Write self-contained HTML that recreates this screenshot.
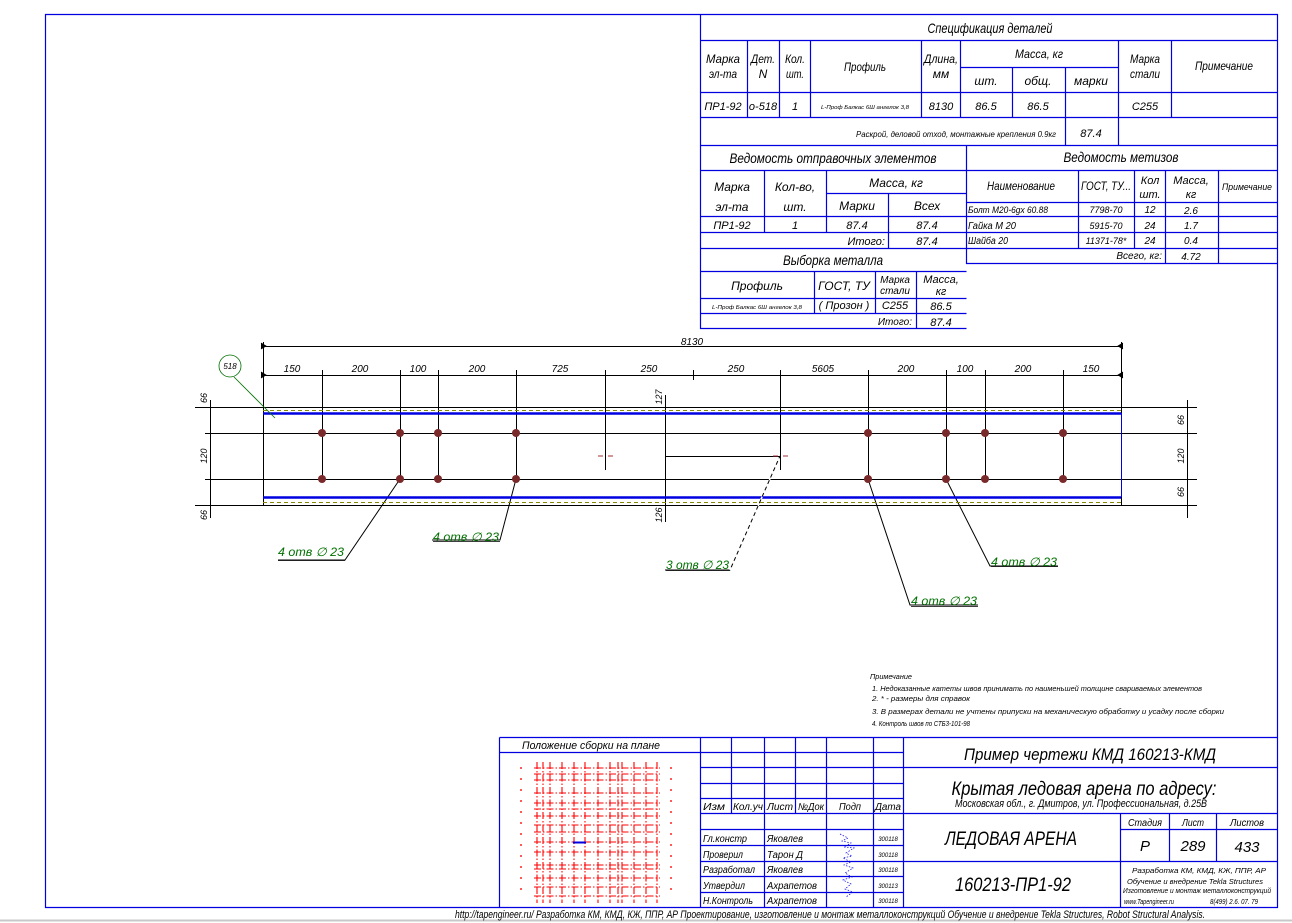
<!DOCTYPE html>
<html><head><meta charset="utf-8"><style>
html,body{margin:0;padding:0;background:#fff;}
svg{display:block}
text{font-family:"Liberation Sans",sans-serif;font-style:italic;fill:#000;}
.b{stroke:#0000e0;stroke-width:1.2;fill:none}
.k{stroke:#000;stroke-width:1;fill:none}
.g{fill:#007000}
</style></head><body>
<svg width="1292" height="923" viewBox="0 0 1292 923" xmlns="http://www.w3.org/2000/svg">
<rect x="0" y="0" width="1292" height="923" fill="#fff"/>
<path class="b" d="M45.5 14.5H1277.5V907.5H45.5Z"/>
<line x1="0" y1="920.5" x2="1292" y2="920.5" stroke="#c8c8c8" stroke-width="2"/>

<g class="b">
<path d="M700.5 14.5V328.5H966.5"/>
<path d="M700.5 40.5H1277.5M700.5 92.5H1277.5M700.5 117.5H1277.5M700.5 145.5H1277.5M960.5 67.5H1118.5"/>
<path d="M747.5 40.5V117.5M779.5 40.5V117.5M810.5 40.5V117.5M921.5 40.5V117.5M960.5 40.5V117.5M1012.5 67.5V117.5M1065.5 67.5V145.5M1118.5 40.5V145.5M1171.5 40.5V117.5"/>
<path d="M966.5 145.5V263.5H1277.5M700.5 170.5H1277.5M826.5 193.5H966.5M700.5 216.5H966.5M700.5 232.5H1277.5M700.5 248.5H1277.5M966.5 202.5H1277.5M966.5 216.5H1277.5"/>
<path d="M764.5 170.5V232.5M826.5 170.5V232.5M888.5 193.5V248.5"/>
<path d="M1078.5 170.5V248.5M1134.5 170.5V248.5M1165.5 170.5V263.5M1218.5 170.5V263.5"/>
<path d="M700.5 271.5H966.5M700.5 298.5H966.5M700.5 313.5H966.5M814.5 271.5V313.5M875.5 271.5V313.5M916.5 271.5V328.5"/>
</g>
<g font-size="12">
<text x="990" y="33" text-anchor="middle" font-size="14" textLength="125" lengthAdjust="spacingAndGlyphs">Спецификация деталей</text>
<text x="723" y="63" text-anchor="middle" textLength="34" lengthAdjust="spacingAndGlyphs">Марка</text>
<text x="723" y="78" text-anchor="middle" textLength="28" lengthAdjust="spacingAndGlyphs">эл-та</text>
<text x="763" y="63" text-anchor="middle" textLength="24" lengthAdjust="spacingAndGlyphs">Дет.</text>
<text x="763" y="78" text-anchor="middle">N</text>
<text x="795" y="63" text-anchor="middle" textLength="20" lengthAdjust="spacingAndGlyphs">Кол.</text>
<text x="795" y="78" text-anchor="middle" textLength="18" lengthAdjust="spacingAndGlyphs">шт.</text>
<text x="865" y="71" text-anchor="middle" textLength="42" lengthAdjust="spacingAndGlyphs">Профиль</text>
<text x="941" y="63" text-anchor="middle" textLength="34" lengthAdjust="spacingAndGlyphs">Длина,</text>
<text x="941" y="78" text-anchor="middle">мм</text>
<text x="1039" y="58" text-anchor="middle" textLength="48" lengthAdjust="spacingAndGlyphs">Масса, кг</text>
<text x="986" y="85" text-anchor="middle">шт.</text>
<text x="1038" y="85" text-anchor="middle">общ.</text>
<text x="1091" y="85" text-anchor="middle">марки</text>
<text x="1145" y="63" text-anchor="middle" textLength="30" lengthAdjust="spacingAndGlyphs">Марка</text>
<text x="1145" y="78" text-anchor="middle" textLength="30" lengthAdjust="spacingAndGlyphs">стали</text>
<text x="1224" y="70" text-anchor="middle" textLength="58" lengthAdjust="spacingAndGlyphs">Примечание</text>
<text x="723" y="110" text-anchor="middle" font-size="11">ПР1-92</text>
<text x="763" y="110" text-anchor="middle" font-size="11">о-518</text>
<text x="795" y="110" text-anchor="middle" font-size="11">1</text>
<text x="865" y="109" text-anchor="middle" font-size="5.5" textLength="88" lengthAdjust="spacingAndGlyphs">L-Проф Балкас 6Ш ангелок 3,8</text>
<text x="941" y="110" text-anchor="middle" font-size="11">8130</text>
<text x="986" y="110" text-anchor="middle" font-size="11">86.5</text>
<text x="1038" y="110" text-anchor="middle" font-size="11">86.5</text>
<text x="1145" y="110" text-anchor="middle" font-size="11">С255</text>
<text x="1056" y="137" text-anchor="end" font-size="8" textLength="200" lengthAdjust="spacingAndGlyphs">Раскрой, деловой отход, монтажные крепления 0.9кг</text>
<text x="1091" y="137" text-anchor="middle" font-size="11">87.4</text>
<text x="833" y="163" text-anchor="middle" font-size="14" textLength="207" lengthAdjust="spacingAndGlyphs">Ведомость отправочных элементов</text>
<text x="1121" y="162" text-anchor="middle" font-size="14" textLength="115" lengthAdjust="spacingAndGlyphs">Ведомость метизов</text>
<text x="732" y="191" text-anchor="middle">Марка</text>
<text x="732" y="211" text-anchor="middle">эл-та</text>
<text x="795" y="191" text-anchor="middle">Кол-во,</text>
<text x="795" y="211" text-anchor="middle">шт.</text>
<text x="896" y="187" text-anchor="middle">Масса, кг</text>
<text x="857" y="210" text-anchor="middle">Марки</text>
<text x="927" y="210" text-anchor="middle">Всех</text>
<text x="732" y="229" text-anchor="middle" font-size="11">ПР1-92</text>
<text x="795" y="229" text-anchor="middle" font-size="11">1</text>
<text x="857" y="229" text-anchor="middle" font-size="11">87.4</text>
<text x="927" y="229" text-anchor="middle" font-size="11">87.4</text>
<text x="885" y="245" text-anchor="end" font-size="11">Итого:</text>
<text x="927" y="245" text-anchor="middle" font-size="11">87.4</text>
<text x="1021" y="190" text-anchor="middle" textLength="68" lengthAdjust="spacingAndGlyphs">Наименование</text>
<text x="1106" y="190" text-anchor="middle" textLength="50" lengthAdjust="spacingAndGlyphs">ГОСТ, ТУ...</text>
<text x="1150" y="184" text-anchor="middle" font-size="11">Кол</text>
<text x="1150" y="198" text-anchor="middle" font-size="11">шт.</text>
<text x="1191" y="184" text-anchor="middle" font-size="11">Масса,</text>
<text x="1191" y="198" text-anchor="middle" font-size="11">кг</text>
<text x="1247" y="190" text-anchor="middle" font-size="9" textLength="50" lengthAdjust="spacingAndGlyphs">Примечание</text>
<text x="968" y="213" font-size="9" textLength="80" lengthAdjust="spacingAndGlyphs">Болт М20-6gх 60.88</text>
<text x="968" y="229" font-size="10" textLength="48" lengthAdjust="spacingAndGlyphs">Гайка М 20</text>
<text x="968" y="244" font-size="10" textLength="40" lengthAdjust="spacingAndGlyphs">Шайба 20</text>
<text x="1106" y="213" text-anchor="middle" font-size="9">7798-70</text>
<text x="1106" y="229" text-anchor="middle" font-size="9">5915-70</text>
<text x="1106" y="244" text-anchor="middle" font-size="9">11371-78*</text>
<text x="1150" y="213" text-anchor="middle" font-size="10">12</text>
<text x="1150" y="229" text-anchor="middle" font-size="10">24</text>
<text x="1150" y="244" text-anchor="middle" font-size="10">24</text>
<text x="1191" y="214" text-anchor="middle" font-size="10">2.6</text>
<text x="1191" y="229" text-anchor="middle" font-size="10">1.7</text>
<text x="1191" y="244" text-anchor="middle" font-size="10">0.4</text>
<text x="1162" y="259" text-anchor="end" font-size="10">Всего, кг:</text>
<text x="1191" y="260" text-anchor="middle" font-size="10">4.72</text>
<text x="833" y="265" text-anchor="middle" font-size="14" textLength="100" lengthAdjust="spacingAndGlyphs">Выборка металла</text>
<text x="757" y="290" text-anchor="middle">Профиль</text>
<text x="844" y="290" text-anchor="middle">ГОСТ, ТУ</text>
<text x="895" y="283" text-anchor="middle" font-size="10">Марка</text>
<text x="895" y="294" text-anchor="middle" font-size="10">стали</text>
<text x="941" y="283" text-anchor="middle" font-size="11">Масса,</text>
<text x="941" y="295" text-anchor="middle" font-size="11">кг</text>
<text x="757" y="309" text-anchor="middle" font-size="5.5" textLength="90" lengthAdjust="spacingAndGlyphs">L-Проф Балкас 6Ш ангелок 3,8</text>
<text x="844" y="309" text-anchor="middle" font-size="11">( Прозон )</text>
<text x="895" y="309" text-anchor="middle" font-size="11">С255</text>
<text x="941" y="310" text-anchor="middle" font-size="11">86.5</text>
<text x="912" y="325" text-anchor="end" font-size="10">Итого:</text>
<text x="941" y="326" text-anchor="middle" font-size="11">87.4</text>
</g>

<g class="k" stroke-width="0.8">
<path d="M263.5 342V505M1121.5 342V505"/>
<path d="M263 346.5H1121M263 375.5H1121"/>
<path d="M322.5 370V479M400.5 370V479M438.5 370V479M516.5 370V479M605.5 370V470M693.5 370V380M780.5 370V470M868.5 370V479M946.5 370V479M985.5 370V479M1063.5 370V479"/>
<path d="M195 407.5H1197M195 505.5H1197M205 433.5H1197M205 479.5H1197"/>
<path d="M210.5 400V518M1187.5 400V518"/>
<path d="M665.5 395V522M665 456.5H780"/>
<path d="M400 479L345 560H278M516 479L500 540H432M780 456L730 570H665M868 479L910 605H978M946 479L990 566H1058"/>
</g>
<g stroke="#000" stroke-width="0.8">
<path d="M261 343l5 3-5 3M1123 343l-5 3 5 3M261 372l5 3-5 3M1123 372l-5 3 5 3"/>
</g>
<path d="M263 410.5H1121M263 502.5H1121" stroke="#888800" stroke-width="1" stroke-dasharray="4 3"/>
<path d="M263 413.5H1121M263 497.5H1121" stroke="#0000e0" stroke-width="2.5"/>
<path d="M1121.5 413V497" stroke="#0000e0" stroke-width="1"/>
<path d="M730 570L780 456" stroke="#fff" stroke-width="1.5" stroke-dasharray="3 4"/>
<g fill="#7a2a2a">
<circle cx="322" cy="433" r="4"/><circle cx="400" cy="433" r="4"/><circle cx="438" cy="433" r="4"/><circle cx="516" cy="433" r="4"/>
<circle cx="868" cy="433" r="4"/><circle cx="946" cy="433" r="4"/><circle cx="985" cy="433" r="4"/><circle cx="1063" cy="433" r="4"/>
<circle cx="322" cy="479" r="4"/><circle cx="400" cy="479" r="4"/><circle cx="438" cy="479" r="4"/><circle cx="516" cy="479" r="4"/>
<circle cx="868" cy="479" r="4"/><circle cx="946" cy="479" r="4"/><circle cx="985" cy="479" r="4"/><circle cx="1063" cy="479" r="4"/>
</g>
<path d="M598 456h5M608 456h5M773 456h5M783 456h5" stroke="#a03030" stroke-width="1"/>
<circle cx="230" cy="366" r="11" fill="none" stroke="#007000" stroke-width="0.8"/>
<path d="M234 377L275 418" stroke="#007000" stroke-width="0.8"/>
<g font-size="10" font-style="normal">
<text x="692" y="345" text-anchor="middle">8130</text>
<text x="292" y="372" text-anchor="middle">150</text><text x="360" y="372" text-anchor="middle">200</text>
<text x="418" y="372" text-anchor="middle">100</text><text x="477" y="372" text-anchor="middle">200</text>
<text x="560" y="372" text-anchor="middle">725</text><text x="649" y="372" text-anchor="middle">250</text>
<text x="736" y="372" text-anchor="middle">250</text><text x="823" y="372" text-anchor="middle">5605</text>
<text x="906" y="372" text-anchor="middle">200</text><text x="965" y="372" text-anchor="middle">100</text>
<text x="1023" y="372" text-anchor="middle">200</text><text x="1091" y="372" text-anchor="middle">150</text>
<text x="230" y="369" text-anchor="middle" font-size="8">518</text>
<text transform="translate(207,398) rotate(-90)" text-anchor="middle" font-size="9">66</text>
<text transform="translate(207,456) rotate(-90)" text-anchor="middle" font-size="9">120</text>
<text transform="translate(207,515) rotate(-90)" text-anchor="middle" font-size="9">66</text>
<text transform="translate(1184,420) rotate(-90)" text-anchor="middle" font-size="9">66</text>
<text transform="translate(1184,456) rotate(-90)" text-anchor="middle" font-size="9">120</text>
<text transform="translate(1184,492) rotate(-90)" text-anchor="middle" font-size="9">66</text>
<text transform="translate(662,397) rotate(-90)" text-anchor="middle" font-size="9">127</text>
<text transform="translate(662,515) rotate(-90)" text-anchor="middle" font-size="9">126</text>
</g>
<g font-size="12" class="g">
<text x="278" y="556" class="g" textLength="66" lengthAdjust="spacingAndGlyphs">4 отв ∅ 23</text>
<text x="433" y="541" class="g" textLength="66" lengthAdjust="spacingAndGlyphs">4 отв ∅ 23</text>
<text x="666" y="569" class="g" textLength="63" lengthAdjust="spacingAndGlyphs">3 отв ∅ 23</text>
<text x="911" y="605" class="g" textLength="66" lengthAdjust="spacingAndGlyphs">4 отв ∅ 23</text>
<text x="991" y="566" class="g" textLength="66" lengthAdjust="spacingAndGlyphs">4 отв ∅ 23</text>
</g>
<path d="M278 560.5H345M433 541.5H500M666 570.5H730M911 606.5H978M991 566.5H1058" stroke="#000" stroke-width="0.8"/>

<g font-size="7.5">
<text x="870" y="679" textLength="42" lengthAdjust="spacingAndGlyphs">Примечание</text>
<text x="872" y="691" textLength="330" lengthAdjust="spacingAndGlyphs">1. Недоказанные катеты швов принимать по наименьшей толщине свариваемых элементов</text>
<text x="872" y="701" textLength="98" lengthAdjust="spacingAndGlyphs">2. * - размеры для справок</text>
<text x="872" y="714" textLength="352" lengthAdjust="spacingAndGlyphs">3. В размерах детали не учтены припуски на механическую обработку и усадку после сборки</text>
<text x="872" y="726" textLength="98" lengthAdjust="spacingAndGlyphs">4. Контроль швов по СТБ3-101-98</text>
</g>

<g class="b">
<path d="M499.5 737.5H1277.5M499.5 737.5V907.5M499.5 752.5H700.5"/>
<path d="M700.5 737.5V907.5M903.5 737.5V907.5"/>
<path d="M700.5 752.5H903.5M700.5 767.5H1277.5M700.5 783.5H903.5M700.5 798.5H903.5M700.5 813.5H1277.5M700.5 829.5H903.5M700.5 845.5H903.5M700.5 861.5H1277.5M700.5 876.5H903.5M700.5 892.5H903.5M1120.5 829.5H1277.5"/>
<path d="M731.5 737.5V813.5M764.5 737.5V907.5M795.5 737.5V813.5M826.5 737.5V907.5M873.5 737.5V907.5"/>
<path d="M1120.5 813.5V907.5M1169.5 813.5V861.5M1216.5 813.5V861.5"/>
</g>
<text x="591" y="749" text-anchor="middle" font-size="11" textLength="138" lengthAdjust="spacingAndGlyphs">Положение сборки на плане</text>
<g stroke="#ff0000" stroke-width="1.1" stroke-dasharray="7 2 1.5 2">
<path d="M537 762V903M543 762V903M550 762V903M562 762V903M574 762V903M585 762V903M598 762V903M610 762V903M618 762V903M622 762V903M634 762V903M646 762V903M657 762V903"/>
<path d="M534 768H660M534 774H660M534 780H660M534 793H660M534 803H660M534 809H660M534 816H660M534 825H660M534 832H660M534 842H660M534 852H660M534 865H660M534 869H660M534 878H660M534 887H660M534 896H660"/>
</g>
<path d="M521 767V898M671 767V898" stroke="#ff0000" stroke-width="1.3" stroke-dasharray="2 9"/>
<path d="M573 842.5H586" stroke="#0000e0" stroke-width="2"/>
<g font-size="10">
<text x="714" y="810" text-anchor="middle" textLength="22" lengthAdjust="spacingAndGlyphs">Изм</text>
<text x="748" y="810" text-anchor="middle" textLength="30" lengthAdjust="spacingAndGlyphs">Кол.уч</text>
<text x="780" y="810" text-anchor="middle" textLength="26" lengthAdjust="spacingAndGlyphs">Лист</text>
<text x="811" y="810" text-anchor="middle" textLength="26" lengthAdjust="spacingAndGlyphs">№Док</text>
<text x="850" y="810" text-anchor="middle" textLength="22" lengthAdjust="spacingAndGlyphs">Подп</text>
<text x="888" y="810" text-anchor="middle" textLength="26" lengthAdjust="spacingAndGlyphs">Дата</text>
<text x="703" y="842" textLength="44" lengthAdjust="spacingAndGlyphs">Гл.констр</text>
<text x="703" y="858" textLength="40" lengthAdjust="spacingAndGlyphs">Проверил</text>
<text x="703" y="873" textLength="52" lengthAdjust="spacingAndGlyphs">Разработал</text>
<text x="703" y="889" textLength="42" lengthAdjust="spacingAndGlyphs">Утвердил</text>
<text x="703" y="904" textLength="50" lengthAdjust="spacingAndGlyphs">Н.Контроль</text>
<text x="767" y="842" textLength="36" lengthAdjust="spacingAndGlyphs">Яковлев</text>
<text x="767" y="858" textLength="36" lengthAdjust="spacingAndGlyphs">Тарон Д</text>
<text x="767" y="873" textLength="36" lengthAdjust="spacingAndGlyphs">Яковлев</text>
<text x="767" y="889" textLength="50" lengthAdjust="spacingAndGlyphs">Ахрапетов</text>
<text x="767" y="904" textLength="50" lengthAdjust="spacingAndGlyphs">Ахрапетов</text>
</g>
<g font-size="6">
<text x="888" y="841" text-anchor="middle">300118</text><text x="888" y="857" text-anchor="middle">300118</text>
<text x="888" y="872" text-anchor="middle">300118</text><text x="888" y="888" text-anchor="middle">300113</text>
<text x="888" y="903" text-anchor="middle">300118</text>
</g>
<path d="M840 834l8 4-6 3 9 2-7 4 10 1-8 5 6 3-9 2 8 4-7 3 9 3-8 5 7 4-9 3 8 4-6 5 8 3-7 5" stroke="#0000e0" stroke-width="0.7" fill="none" stroke-dasharray="1.5 1.5"/>
<text x="1090" y="760" text-anchor="middle" font-size="17" textLength="252" lengthAdjust="spacingAndGlyphs">Пример чертежи КМД  160213-КМД</text>
<text x="1084" y="795" text-anchor="middle" font-size="19" textLength="265" lengthAdjust="spacingAndGlyphs">Крытая ледовая арена по адресу:</text>
<text x="1081" y="807" text-anchor="middle" font-size="11" textLength="252" lengthAdjust="spacingAndGlyphs">Московская обл., г. Дмитров, ул. Профессиональная, д.25В</text>
<text x="1011" y="845" text-anchor="middle" font-size="19" textLength="132" lengthAdjust="spacingAndGlyphs">ЛЕДОВАЯ АРЕНА</text>
<text x="1013" y="891" text-anchor="middle" font-size="19" textLength="116" lengthAdjust="spacingAndGlyphs">160213-ПР1-92</text>
<text x="1145" y="826" text-anchor="middle" font-size="10" textLength="34" lengthAdjust="spacingAndGlyphs">Стадия</text>
<text x="1193" y="826" text-anchor="middle" font-size="10" textLength="22" lengthAdjust="spacingAndGlyphs">Лист</text>
<text x="1247" y="826" text-anchor="middle" font-size="10" textLength="34" lengthAdjust="spacingAndGlyphs">Листов</text>
<text x="1145" y="851" text-anchor="middle" font-size="15">Р</text>
<text x="1193" y="851" text-anchor="middle" font-size="15">289</text>
<text x="1247" y="852" text-anchor="middle" font-size="15">433</text>
<g font-size="7">
<text x="1199" y="873" text-anchor="middle" textLength="134" lengthAdjust="spacingAndGlyphs">Разработка КМ, КМД, КЖ, ППР, АР</text>
<text x="1195" y="884" text-anchor="middle" textLength="136" lengthAdjust="spacingAndGlyphs">Обучение  и внедрение Tekla Structures</text>
<text x="1197" y="893" text-anchor="middle" textLength="148" lengthAdjust="spacingAndGlyphs">Изготовление и монтаж металлоконструкций</text>
<text x="1124" y="904" textLength="50" lengthAdjust="spacingAndGlyphs">www.Tapengineer.ru</text>
<text x="1234" y="904" text-anchor="middle" textLength="48" lengthAdjust="spacingAndGlyphs">8(499) 2.6. 07. 79</text>
</g>
<text x="455" y="918" font-size="11" textLength="750" lengthAdjust="spacingAndGlyphs">http://tapengineer.ru/  Разработка КМ, КМД, КЖ, ППР, АР  Проектирование, изготовление и монтаж металлоконструкций  Обучение и внедрение Tekla Structures, Robot Structural Analysis.</text>
</svg>
</body></html>
